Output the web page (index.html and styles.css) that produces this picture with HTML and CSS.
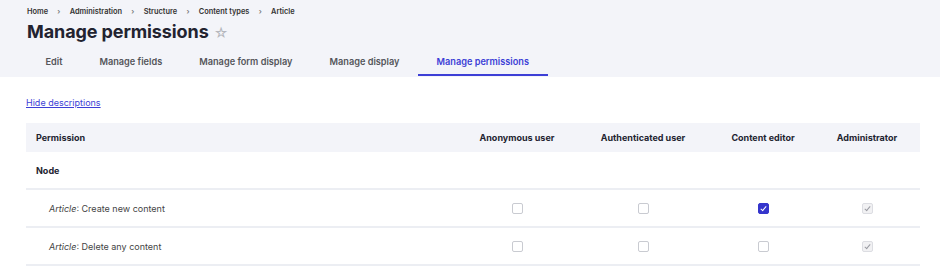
FILE: index.html
```html
<!DOCTYPE html>
<html lang="en">
<head>
    <meta charset="UTF-8">
    <title>Manage permissions</title>
    <link rel="stylesheet" href="styles.css">
</head>
<body>
    <div class="page-header">
        <div class="breadcrumb">
            <span>Home</span><span class="sep">›</span>
            <span>Administration</span><span class="sep">›</span>
            <span>Structure</span><span class="sep">›</span>
            <span>Content types</span><span class="sep">›</span>
            <span>Article</span>
        </div>
        <h1 class="title">Manage permissions <span class="star">☆</span></h1>
        <nav class="tabs">
            <a class="tab">Edit</a>
            <a class="tab">Manage fields</a>
            <a class="tab">Manage form display</a>
            <a class="tab">Manage display</a>
            <a class="tab active">Manage permissions</a>
        </nav>
    </div>

    <div class="content">
        <a class="toggle" href="#">Hide descriptions</a>
        <table class="perms">
            <colgroup>
                <col style="width: 434px">
                <col style="width: 114px">
                <col style="width: 138px">
                <col style="width: 102px">
                <col style="width: 106px">
            </colgroup>
            <thead>
                <tr>
                    <th class="name">Permission</th>
                    <th>Anonymous user</th>
                    <th>Authenticated user</th>
                    <th>Content editor</th>
                    <th>Administrator</th>
                </tr>
            </thead>
            <tbody>
                <tr class="module">
                    <td class="name" colspan="5">Node</td>
                </tr>
                <tr>
                    <td class="perm"><em>Article</em>: Create new content</td>
                    <td><span class="cb"></span></td>
                    <td><span class="cb"></span></td>
                    <td><span class="cb checked"></span></td>
                    <td><span class="cb locked"></span></td>
                </tr>
                <tr>
                    <td class="perm"><em>Article</em>: Delete any content</td>
                    <td><span class="cb"></span></td>
                    <td><span class="cb"></span></td>
                    <td><span class="cb"></span></td>
                    <td><span class="cb locked"></span></td>
                </tr>
            </tbody>
        </table>
    </div>
</body>
</html>
```

FILE: styles.css
```css
body {
    margin: 0;
    font-family: Inter, 'Noto Sans', sans-serif;
    color: #222330;
    background: #fff;
}
.page-header {
    background: #f3f4f9;
    padding: 6px 0 0 27px;
    height: 71px;
}
.breadcrumb {
    font-size: 7.4px;
    font-weight: 600;
    color: #333;
    display: flex;
    gap: 9.3px;
    line-height: 11px;
}
.breadcrumb .sep {
    color: #777;
}
.title {
    margin: 2px 0 0;
    font-size: 18px;
    font-weight: 700;
    line-height: 26px;
    letter-spacing: -0.1px;
}
.star {
    font-size: 14px;
    font-weight: 400;
    color: #b5b7bd;
    margin-left: 1px;
}
.tabs {
    display: flex;
    margin: 8px 0 0 0;
}
.tab {
    padding: 2px 18.5px 0;
    font-size: 9.2px;
    font-weight: 600;
    color: #55565b;
    line-height: 12px;
    height: 22px;
    box-sizing: border-box;
    border-bottom: 2px solid transparent;
}
.tab.active {
    color: #3d3fd6;
    border-bottom-color: #3d3fd6;
}
.content {
    padding: 19px 20px 0 26px;
}
.toggle {
    display: block;
    font-size: 9px;
    color: #3d3fd6;
    line-height: 13px;
}
.perms {
    margin-top: 14px;
    border-collapse: collapse;
    table-layout: fixed;
    width: 894px;
    font-size: 9px;
}
.perms th {
    background: #f3f4f9;
    height: 29px;
    padding: 0;
    font-weight: 700;
    color: #222330;
    text-align: center;
}
.perms th.name {
    text-align: left;
    padding-left: 10px;
}
.perms td {
    padding: 0;
    text-align: center;
    height: 36px;
    border-bottom: 2px solid #eceef3;
}
.perms .module td {
    text-align: left;
    padding-left: 10px;
    font-weight: 700;
    color: #222330;
}
.perms td.perm {
    text-align: left;
    padding-left: 23px;
    color: #444;
}
.cb {
    display: inline-block;
    width: 9px;
    height: 9px;
    border: 1px solid #c9cbd1;
    border-radius: 2px;
    vertical-align: middle;
    background: #fff;
    position: relative;
}
.cb.checked {
    background: #3535cc;
    border-color: #3535cc;
}
.cb.checked::after,
.cb.locked::after {
    content: "";
    position: absolute;
    left: 3px;
    top: 1px;
    width: 2px;
    height: 5px;
    border: solid #fff;
    border-width: 0 1.2px 1.2px 0;
    transform: rotate(40deg);
}
.cb.locked {
    background: #f1f1f3;
    border-color: #dcdde2;
}
.cb.locked::after {
    border-color: #9a9ba2;
}
```
